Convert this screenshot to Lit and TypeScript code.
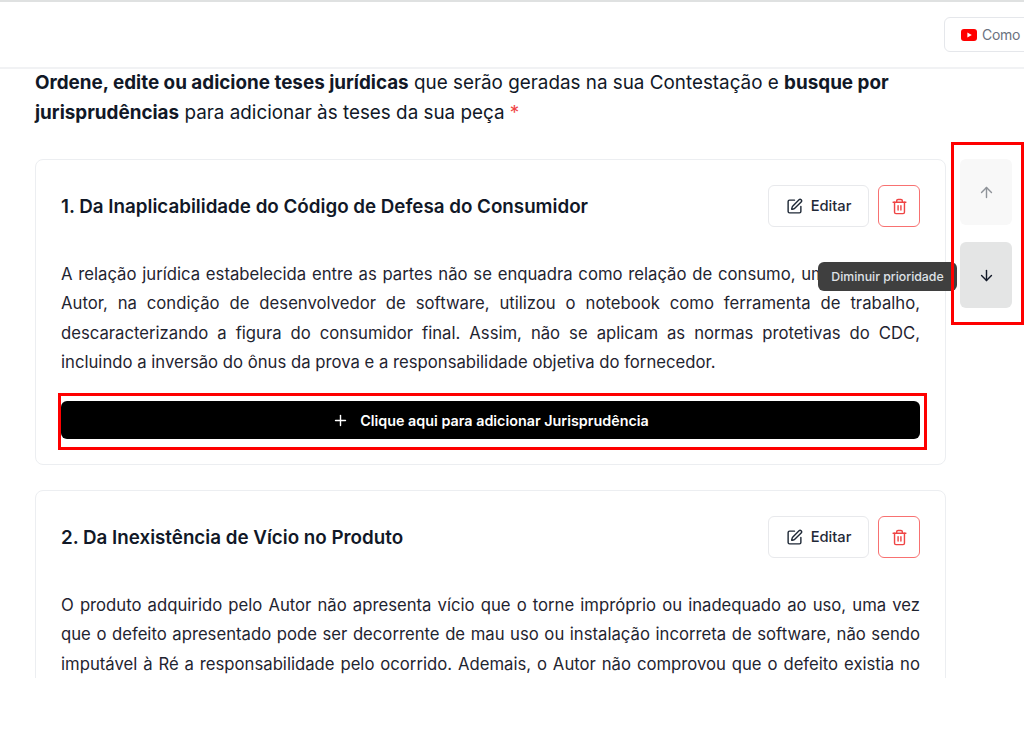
import { LitElement, html, css, svg } from "lit";
import { customElement } from "lit/decorators.js";

const icon = (paths: unknown, size = 17, sw = 2) => html`<svg xmlns="http://www.w3.org/2000/svg" width=${size} height=${size} viewBox="0 0 24 24" fill="none" stroke="currentColor" stroke-width=${sw} stroke-linecap="round" stroke-linejoin="round">${paths}</svg>`;
const pen = svg`<path d="M12 3H5a2 2 0 0 0-2 2v14a2 2 0 0 0 2 2h14a2 2 0 0 0 2-2v-7"/><path d="M18.375 2.625a1 1 0 0 1 3 3l-9.013 9.014a2 2 0 0 1-.853.505l-2.873.84a.5.5 0 0 1-.62-.62l.84-2.873a2 2 0 0 1 .506-.852z"/>`;
const trash = svg`<path d="M3 6h18"/><path d="M19 6v14c0 1-1 2-2 2H7c-1 0-2-1-2-2V6"/><path d="M8 6V4c0-1 1-2 2-2h4c1 0 2 1 2 2v2"/><line x1="10" x2="10" y1="11" y2="17"/><line x1="14" x2="14" y1="11" y2="17"/>`;
const up = svg`<path d="m5 12 7-7 7 7"/><path d="M12 19V5"/>`;
const down = svg`<path d="M12 5v14"/><path d="m19 12-7 7-7-7"/>`;
const plus = svg`<path d="M5 12h14"/><path d="M12 5v14"/>`;

@customElement("app-root")
export class AppRoot extends LitElement {
  static styles = css`
    :host { display: block; position: relative; width: 1024px; height: 738px; overflow: hidden; background: #fff; font-family: Inter, "Noto Sans", sans-serif; color: #111827; }
    .top { box-sizing: border-box; height: 69px; border-top: 2px solid #dfe1e1; border-bottom: 2px solid #f1f2f4; padding: 15px 0 0 944px; display: flex; overflow: hidden; }
    .yt { flex: none; box-sizing: border-box; height: 35px; width: 140px; display: flex; align-items: center; gap: 5px; padding: 0 16px; border: 1px solid #e5e7eb; border-radius: 6px; font-size: 14px; letter-spacing: -0.3px; color: #6b7280; }
    .main { height: 609px; overflow: hidden; box-sizing: border-box; padding: 0 0 0 35px; }
    .intro { margin: -1px 0 0; width: 900px; font-size: 18.85px; line-height: 29.5px; color: #111827; }
    .intro b { font-weight: 700; }
    .req { color: #ef4444; }
    .row { display: flex; gap: 14px; margin-top: 32px; align-items: flex-start; }
    .cards { width: 911px; flex: none; display: flex; flex-direction: column; gap: 25px; }
    .card { box-sizing: border-box; border: 1px solid #eceef1; border-radius: 8px; padding: 25px 25px 25px; }
    .head { display: flex; align-items: center; justify-content: space-between; height: 42px; }
    .title { margin: 0; font-size: 18.77px; font-weight: 600; }
    .acts { display: flex; gap: 9px; }
    .edit { box-sizing: border-box; width: 101px; height: 42px; display: flex; align-items: center; justify-content: center; gap: 8px; border: 1px solid #e8e9ec; border-radius: 6px; background: #fff; font: 500 14.7px Inter, sans-serif; color: #1f2937; padding: 0; }
    .del { box-sizing: border-box; width: 42px; height: 42px; display: flex; align-items: center; justify-content: center; border: 1px solid #f87171; border-radius: 6px; background: #fff; color: #ef4444; padding: 0; }
    .text { margin: 33px 0 0; font-size: 16.7px; line-height: 29.3px; text-align: justify; color: #1f2430; }
    .add { margin-top: 24px; box-sizing: border-box; width: 100%; height: 38px; display: flex; align-items: center; justify-content: center; gap: 11px; background: #000; color: #fff; border: 0; border-radius: 6px; font: 600 14.35px Inter, sans-serif; padding: 0; }
    .side { display: flex; flex-direction: column; gap: 17px; flex: none; }
    .arrow { width: 52px; height: 66px; border-radius: 6px; display: flex; align-items: center; justify-content: center; border: 0; padding: 0; }
    .arrow.off { background: #f8f8f8; color: #8f9399; }
    .arrow.on { background: #e4e5e5; color: #111827; }
    .mark { position: absolute; box-sizing: border-box; border: 3px solid #fe0000; pointer-events: none; }
    .m1 { left: 951px; top: 142px; width: 73px; height: 183px; }
    .m2 { left: 58px; top: 393px; width: 869px; height: 57px; }
    .tip { position: absolute; left: 818px; top: 262px; width: 139px; height: 29px; box-sizing: border-box; background: #3f3f3f; border-radius: 6px; color: #dfe2e6; font-size: 12.3px; font-weight: 500; display: flex; align-items: center; justify-content: center; }
  `;

  private card(title: string, body: string, add: boolean) {
    return html`<section class="card">
      <div class="head">
        <h2 class="title">${title}</h2>
        <div class="acts">
          <button class="edit">${icon(pen)}Editar</button>
          <button class="del">${icon(trash)}</button>
        </div>
      </div>
      <p class="text">${body}</p>
      ${add ? html`<button class="add">${icon(plus)}Clique aqui para adicionar Jurisprudência</button>` : ""}
    </section>`;
  }

  render() {
    return html`
      <header class="top">
        <div class="yt">
          <svg width="16" height="12" viewBox="0 0 16 12"><rect width="16" height="12" rx="3" fill="#f00"/><path d="M6.4 3.4v5.2L10.8 6z" fill="#fff"/></svg>
          <span>Como Usar</span>
        </div>
      </header>
      <main class="main">
        <p class="intro"><b>Ordene, edite ou adicione teses jurídicas</b> que serão geradas na sua Contestação e <b>busque por jurisprudências</b> para adicionar às teses da sua peça <span class="req">*</span></p>
        <div class="row">
          <div class="cards">
            ${this.card("1. Da Inaplicabilidade do Código de Defesa do Consumidor", "A relação jurídica estabelecida entre as partes não se enquadra como relação de consumo, uma vez que o Autor, na condição de desenvolvedor de software, utilizou o notebook como ferramenta de trabalho, descaracterizando a figura do consumidor final. Assim, não se aplicam as normas protetivas do CDC, incluindo a inversão do ônus da prova e a responsabilidade objetiva do fornecedor.", true)}
            ${this.card("2. Da Inexistência de Vício no Produto", "O produto adquirido pelo Autor não apresenta vício que o torne impróprio ou inadequado ao uso, uma vez que o defeito apresentado pode ser decorrente de mau uso ou instalação incorreta de software, não sendo imputável à Ré a responsabilidade pelo ocorrido. Ademais, o Autor não comprovou que o defeito existia no momento da compra, ônus que lhe competia nos termos da legislação aplicável.", false)}
          </div>
          <div class="side">
            <button class="arrow off">${icon(up)}</button>
            <button class="arrow on">${icon(down)}</button>
          </div>
        </div>
      </main>
      <div class="tip">Diminuir prioridade</div>
      <div class="mark m1"></div>
      <div class="mark m2"></div>
    `;
  }
}
